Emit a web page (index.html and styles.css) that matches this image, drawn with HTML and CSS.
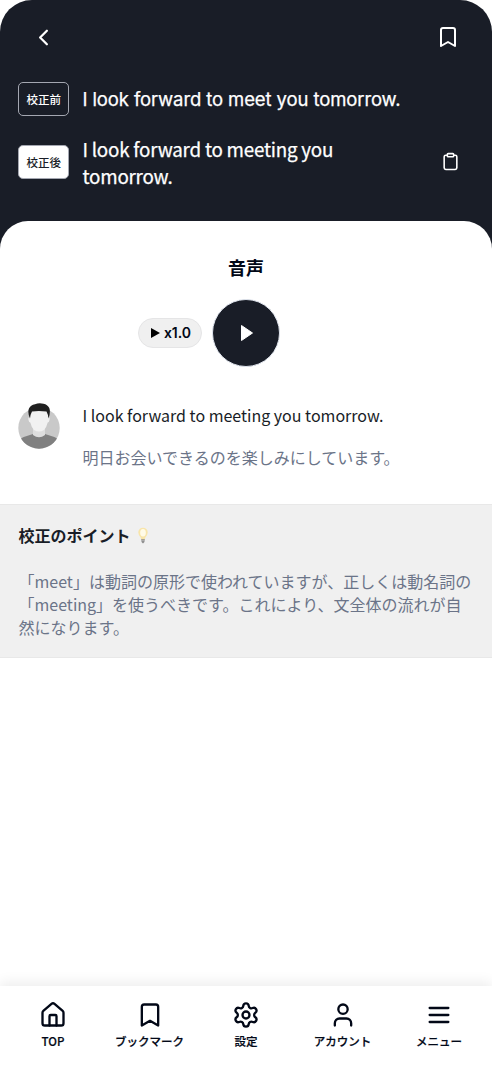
FILE: index.html
```html
<!DOCTYPE html>
<html lang="ja">
<head>
<meta charset="utf-8">
<title>添削結果</title>
<link rel="stylesheet" href="styles.css">
</head>
<body>
<div class="app">
  <header class="hero">
    <div class="toolbar">
      <svg class="icon back" viewBox="0 0 24 24"><path d="m15 18-6-6 6-6"/></svg>
      <svg class="icon save" viewBox="0 0 24 24"><path d="m19 21-7-4-7 4V5a2 2 0 0 1 2-2h10a2 2 0 0 1 2 2v16z"/></svg>
    </div>
    <div class="line before">
      <span class="tag">校正前</span>
      <p class="sentence original">I look forward to meet you tomorrow.</p>
    </div>
    <div class="line after">
      <span class="tag filled">校正後</span>
      <p class="sentence">I look forward to meeting you<br>tomorrow.</p>
      <svg class="icon copy" viewBox="0 0 24 24"><rect x="8" y="2" width="8" height="4" rx="1"/><path d="M16 4h2a2 2 0 0 1 2 2v14a2 2 0 0 1-2 2H6a2 2 0 0 1-2-2V6a2 2 0 0 1 2-2h2"/></svg>
    </div>
  </header>
  <main class="sheet">
    <h2 class="title">音声</h2>
    <div class="player">
      <button class="speed"><svg viewBox="0 0 9 10"><path d="M0 0 9 5 0 10z"/></svg><span>x1.0</span></button>
      <button class="play"><svg viewBox="0 0 14 18"><path d="M1.500 1.500 12.500 9 1.500 16.500z"/></svg></button>
    </div>
    <div class="speech">
      <svg class="avatar" viewBox="0 0 42 46">
        <defs><clipPath id="disc"><circle cx="21" cy="25" r="20.700"/></clipPath></defs>
        <circle cx="21" cy="25" r="20.700" fill="#c9c9c9"/>
        <path clip-path="url(#disc)" d="M0 46V37Q7 33 15 31q6 5 12 0Q35 33 42 37V46z" fill="#808080"/>
        <path d="M15 24h12v8q-6 4.500-12 0z" fill="#dedede"/>
        <path d="M12 8h18v6q2.200 0 1.500 3-.4 2.500-1.800 2.500Q28.500 24.500 26 27q-5 3-10 0-2.500-2.500-3.700-7.500-1.400 0-1.800-2.500Q9.800 14 12 14z" fill="#f1f1f1"/>
        <path d="M12 15.500Q9.300 9 11 5.500 12.500 2 17 1.200q4-1.700 8.500-.5 4 .8 5.800 4.300 1.500 4-.8 10.500-.3-4-2-7-8-1.200-14.500 0-1.700 3-2 7z" fill="#202020"/>
      </svg>
      <div>
        <p class="english">I look forward to meeting you tomorrow.</p>
        <p class="japanese">明日お会いできるのを楽しみにしています。</p>
      </div>
    </div>
    <section class="point">
      <h3>校正のポイント <svg class="bulb" viewBox="0 0 12 18"><path d="M3.500 11Q1 8 1 5.700a5 5 0 0 1 10 0Q11 8 8.500 11l-.7 2.500H4.200z" fill="#f8e5aa"/><ellipse cx="6" cy="6" rx="3" ry="4" fill="#fffbe8"/><path d="M4 13h4l-.5 3L6 17.500l-1.500-1.500z" fill="#888"/><path d="M4 14.500h4" stroke="#ccc" stroke-width=".7"/></svg></h3>
      <p>「meet」は動詞の原形で使われていますが、正しくは動名詞の<br>「meeting」を使うべきです。これにより、文全体の流れが自<br>然になります。</p>
    </section>
  </main>
  <nav class="tabs">
    <a><svg class="icon" viewBox="0 0 24 24"><path d="M3 10a2 2 0 0 1 .7-1.500l7-6a2 2 0 0 1 2.600 0l7 6A2 2 0 0 1 21 10v9a2 2 0 0 1-2 2H5a2 2 0 0 1-2-2z"/><path d="M15 21v-8a1 1 0 0 0-1-1h-4a1 1 0 0 0-1 1v8"/></svg><span>TOP</span></a>
    <a><svg class="icon" viewBox="0 0 24 24"><path d="m19 21-7-4-7 4V5a2 2 0 0 1 2-2h10a2 2 0 0 1 2 2v16z"/></svg><span>ブックマーク</span></a>
    <a><svg class="icon" viewBox="0 0 24 24"><path d="M9.670 4.136a2.340 2.340 0 0 1 4.660 0 2.340 2.340 0 0 0 3.320 1.915 2.340 2.340 0 0 1 2.330 4.033 2.340 2.340 0 0 0 0 3.831 2.340 2.340 0 0 1-2.330 4.033 2.340 2.340 0 0 0-3.320 1.915 2.340 2.340 0 0 1-4.660 0 2.340 2.340 0 0 0-3.320-1.915 2.340 2.340 0 0 1-2.330-4.033 2.340 2.340 0 0 0 0-3.831 2.340 2.340 0 0 1 2.330-4.033 2.340 2.340 0 0 0 3.320-1.915"/><circle cx="12" cy="12" r="3"/></svg><span>設定</span></a>
    <a><svg class="icon" viewBox="0 0 24 24"><path d="M19 21v-2a4 4 0 0 0-4-4H9a4 4 0 0 0-4 4v2"/><circle cx="12" cy="7" r="4"/></svg><span>アカウント</span></a>
    <a><svg class="icon" viewBox="0 0 24 24"><path d="M4 6h16M4 12h16M4 18h16"/></svg><span>メニュー</span></a>
  </nav>
</div>
</body>
</html>
```

FILE: styles.css
```css
* { box-sizing: border-box; margin: 0; padding: 0; }
body { background: #fff; font-family: "Noto Sans CJK JP", sans-serif; color: #020817; }
.app { height: 1066px; display: flex; flex-direction: column; overflow: hidden; border-radius: 32px 32px 0 0; background: #fff; }
.icon { fill: none; stroke: currentColor; stroke-width: 2; stroke-linecap: round; stroke-linejoin: round; flex: none; }
.hero { height: 256px; flex: none; background: #191d27; color: #fff; padding: 0 18.300px; }
.toolbar { height: 74px; display: flex; align-items: center; justify-content: space-between; padding: 0 13.700px 0 12px; }
.back { width: 27px; height: 27px; }
.save { width: 24px; height: 24px; }
.line { display: flex; align-items: center; gap: 13.200px; }
.before { height: 50px; }
.after { height: 75px; }
.tag { width: 51px; height: 34px; flex: none; display: grid; place-items: center; border: 1px solid #a4a7b1; border-radius: 5px; font-size: 11.500px; font-weight: 500; }
.filled { background: #fff; color: #191d27; }
.sentence { flex: 1; padding-top: 1px; font-size: 18.800px; letter-spacing: -.22px; line-height: 27.500px; white-space: nowrap; -webkit-text-stroke: .25px currentColor; }
.original { font-family: Inter, sans-serif; font-size: 18.500px; letter-spacing: -.11px; }
.copy { width: 19px; height: 19px; margin-right: 14px; }
.sheet { flex: 1; margin-top: -35px; border-radius: 28px 28px 0 0; background: #fff; min-height: 0; }
.title { height: 78px; padding-top: 32px; text-align: center; font-size: 18px; line-height: 28px; font-weight: 700; }
.player { display: grid; grid-template-columns: 1fr 68px 1fr; align-items: center; height: 68px; }
button { border: 0; font: inherit; color: inherit; }
.speed { justify-self: end; margin-right: 10px; width: 64px; height: 30px; padding-left: 2px; border: 1px solid #e5e5e6; border-radius: 15px; background: #f0f0f0; display: flex; align-items: center; justify-content: center; gap: 4px; font: 600 14px/20px Inter, sans-serif; }
.speed svg { width: 9px; height: 10px; fill: #000; }
.play { width: 68px; height: 68px; padding-left: 1px; border-radius: 50%; background: #191d27; border: 1px solid #dfe4ed; display: grid; place-items: center; }
.play svg { width: 14px; height: 18px; fill: #fff; stroke: #fff; stroke-linejoin: round; }
.speech { height: 137px; padding: 34px 18px 0; display: flex; align-items: flex-start; gap: 22.500px; }
.avatar { width: 42px; height: 46px; margin-top: 2px; }
.english { font-size: 16px; line-height: 28px; white-space: nowrap; color: #191d27; }
.japanese { margin-top: 14px; font-size: 16px; line-height: 28px; color: #6b7488; white-space: nowrap; }
.point { height: 154px; background: #f0f0f0; border: 1px solid #e8e8e8; border-width: 1px 0; padding: 18px 18.500px; }
.point h3 { font-size: 16px; line-height: 24px; height: 24px; font-weight: 700; display: flex; align-items: center; gap: 6px; color: #191d27; }
.bulb { width: 12px; height: 17px; }
.point p { margin-top: 23px; font-size: 16px; line-height: 23px; color: #6b7488; white-space: nowrap; }
.tabs { height: 80px; flex: none; background: #fff; box-shadow: 0 -4px 12px rgba(0,0,0,.07); display: grid; grid-template-columns: repeat(5, 96.500px); justify-content: center; padding-top: 15px; }
.tabs a { display: flex; flex-direction: column; align-items: center; font-size: 11.500px; line-height: 18px; font-weight: 500; }
.tabs .icon { width: 28px; height: 28px; margin-bottom: 3px; }
.tabs span { -webkit-text-stroke: .2px currentColor; }
```
